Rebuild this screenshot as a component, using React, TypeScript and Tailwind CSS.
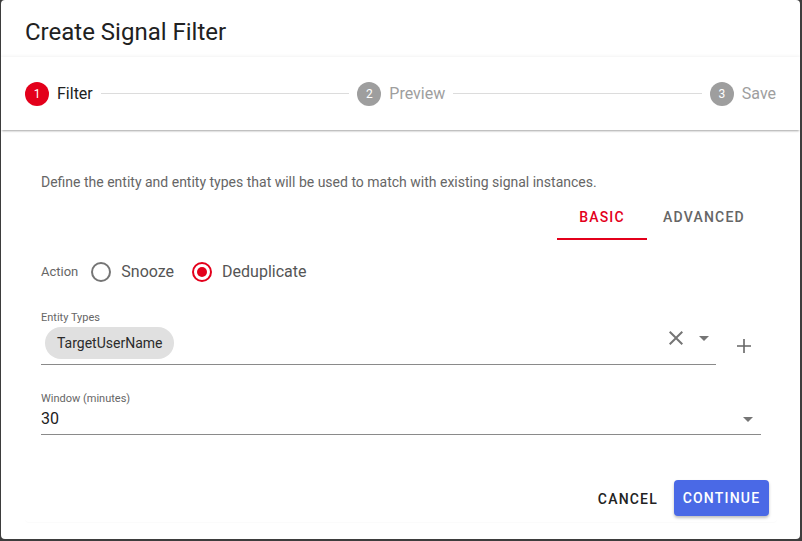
import React from 'react';

const RED = '#e3001b';

const StepIcon = ({ n, active }: { n: number; active?: boolean }) => (
  <div
    className={`w-6 h-6 rounded-full flex items-center justify-center text-[12px] text-white ${active ? 'bg-[#e3001b]' : 'bg-[#9e9e9e]'}`}
  >
    {n}
  </div>
);

const Radio = ({ checked }: { checked?: boolean }) => (
  <div className="w-[42px] h-[42px] flex items-center justify-center">
    <div
      className={`w-5 h-5 rounded-full border-2 flex items-center justify-center ${checked ? 'border-[#e3001b]' : 'border-[#757575]'}`}
    >
      {checked && <div className="w-[10px] h-[10px] rounded-full bg-[#e3001b]" />}
    </div>
  </div>
);

const DropArrow = () => (
  <svg width="24" height="24" viewBox="0 0 24 24" className="fill-[#757575]">
    <path d="M7 10l5 5 5-5z" />
  </svg>
);

export default function App() {
  return (
    <div className="h-screen w-full bg-[#3d3d3d] overflow-hidden pl-[1px]" style={{ fontFamily: 'Roboto, "Liberation Sans", sans-serif' }}>
      <div className="w-[799px] h-[539px] bg-white rounded-[4px] flex flex-col overflow-hidden">
        {/* title */}
        <div className="h-[57px] px-[24px] pt-[16px] text-[24px] leading-[32px] text-[#212121]">Create Signal Filter</div>

        {/* stepper */}
        <div className="h-[73px] flex items-center px-[24px] bg-white shadow-[0_2px_2px_-1px_rgba(0,0,0,0.35),0_-1px_3px_rgba(0,0,0,0.05)] relative z-10">
          <StepIcon n={1} active />
          <span className="ml-2 text-[16px] text-[#212121] pt-px">Filter</span>
          <div className="flex-1 h-px bg-[#dcdcdc] mx-2" />
          <StepIcon n={2} />
          <span className="ml-2 text-[16px] text-[#9e9e9e] pt-px">Preview</span>
          <div className="flex-1 h-px bg-[#dcdcdc] mx-2" />
          <StepIcon n={3} />
          <span className="ml-2 text-[16px] text-[#9e9e9e] pt-px">Save</span>
        </div>

        {/* content */}
        <div className="flex-1 px-[24px] pt-[23px]">
          <div className="w-[752px] h-[369px] rounded-[4px] shadow-[0_1px_1px_rgba(0,0,0,0.02)] px-4 flex flex-col">
            <p className="mt-[19px] text-[14px] leading-5 text-[#666]">
              Define the entity and entity types that will be used to match with existing signal instances.
            </p>

            {/* tabs */}
            <div className="mt-[1px] flex justify-end h-[47px]">
              <div className="w-[90px] pt-[3px] flex items-center justify-center text-[14px] font-medium tracking-[1.2px] border-b-2 border-[#e3001b]" style={{ color: RED }}>
                BASIC
              </div>
              <div className="w-[114px] pt-[3px] flex items-center justify-center text-[14px] font-medium tracking-[1.2px] text-[#666] border-b-2 border-transparent">
                ADVANCED
              </div>
            </div>

            {/* action */}
            <div className="mt-[11px] flex items-center h-[42px]">
              <span className="text-[13px] text-[#666] mr-[2px]">Action</span>
              <Radio />
              <span className="text-[16px] text-[#555] ml-[-1px] mr-[7px]">Snooze</span>
              <Radio checked />
              <span className="text-[16px] text-[#555] ml-[-1px]">Deduplicate</span>
            </div>

            {/* entity types */}
            <div className="mt-[18px] flex items-end">
              <div className="w-[675px] border-b border-[#8a8a8a] pb-[5px]">
                <div className="text-[11px] leading-[13px] text-[#666]">Entity Types</div>
                <div className="flex items-center h-8 mt-[3px]">
                  <div className="ml-1 h-8 px-3 rounded-full bg-[#e0e0e0] flex items-center text-[14px] text-[#2b2b2b]">TargetUserName</div>
                  <div className="flex-1" />
                  <svg width="24" height="24" viewBox="0 0 24 24" className="fill-[#757575] -translate-y-[5px]">
                    <path d="M19 6.41L17.59 5 12 10.59 6.41 5 5 6.41 10.59 12 5 17.59 6.41 19 12 13.41 17.59 19 19 17.59 13.41 12z" />
                  </svg>
                  <div className="ml-[4px] -translate-y-[5px]">
                    <DropArrow />
                  </div>
                </div>
              </div>
              <div className="flex-1 flex justify-center mb-[7px] pl-[10px]">
                <svg width="24" height="24" viewBox="0 0 24 24" className="fill-[#666]">
                  <path d="M19 12.8h-6.2V19h-1.6v-6.2H5v-1.6h6.2V5h1.6v6.2H19z" />
                </svg>
              </div>
            </div>

            {/* window */}
            <div className="mt-[27px] border-b border-[#8a8a8a] pb-[3px]">
              <div className="text-[11px] leading-[13px] text-[#666]">Window (minutes)</div>
              <div className="flex items-center justify-between mt-[2px]">
                <span className="text-[16px] leading-[22px] text-[#212121]">30</span>
                <div className="mr-[1px]">
                  <DropArrow />
                </div>
              </div>
            </div>

            {/* actions */}
            <div className="mt-auto mb-[5px] flex justify-end items-center gap-[8px] mr-[-8px]">
              <button className="h-9 px-2 text-[14px] font-medium tracking-[1.2px] text-[#222] mt-[2px]">CANCEL</button>
              <button className="h-9 w-[95px] rounded-[4px] bg-[#4a69e6] text-white text-[14px] font-medium tracking-[1.2px] shadow-[0_2px_3px_rgba(0,0,0,0.25)]">
                CONTINUE
              </button>
            </div>
          </div>
        </div>
      </div>
    </div>
  );
}
